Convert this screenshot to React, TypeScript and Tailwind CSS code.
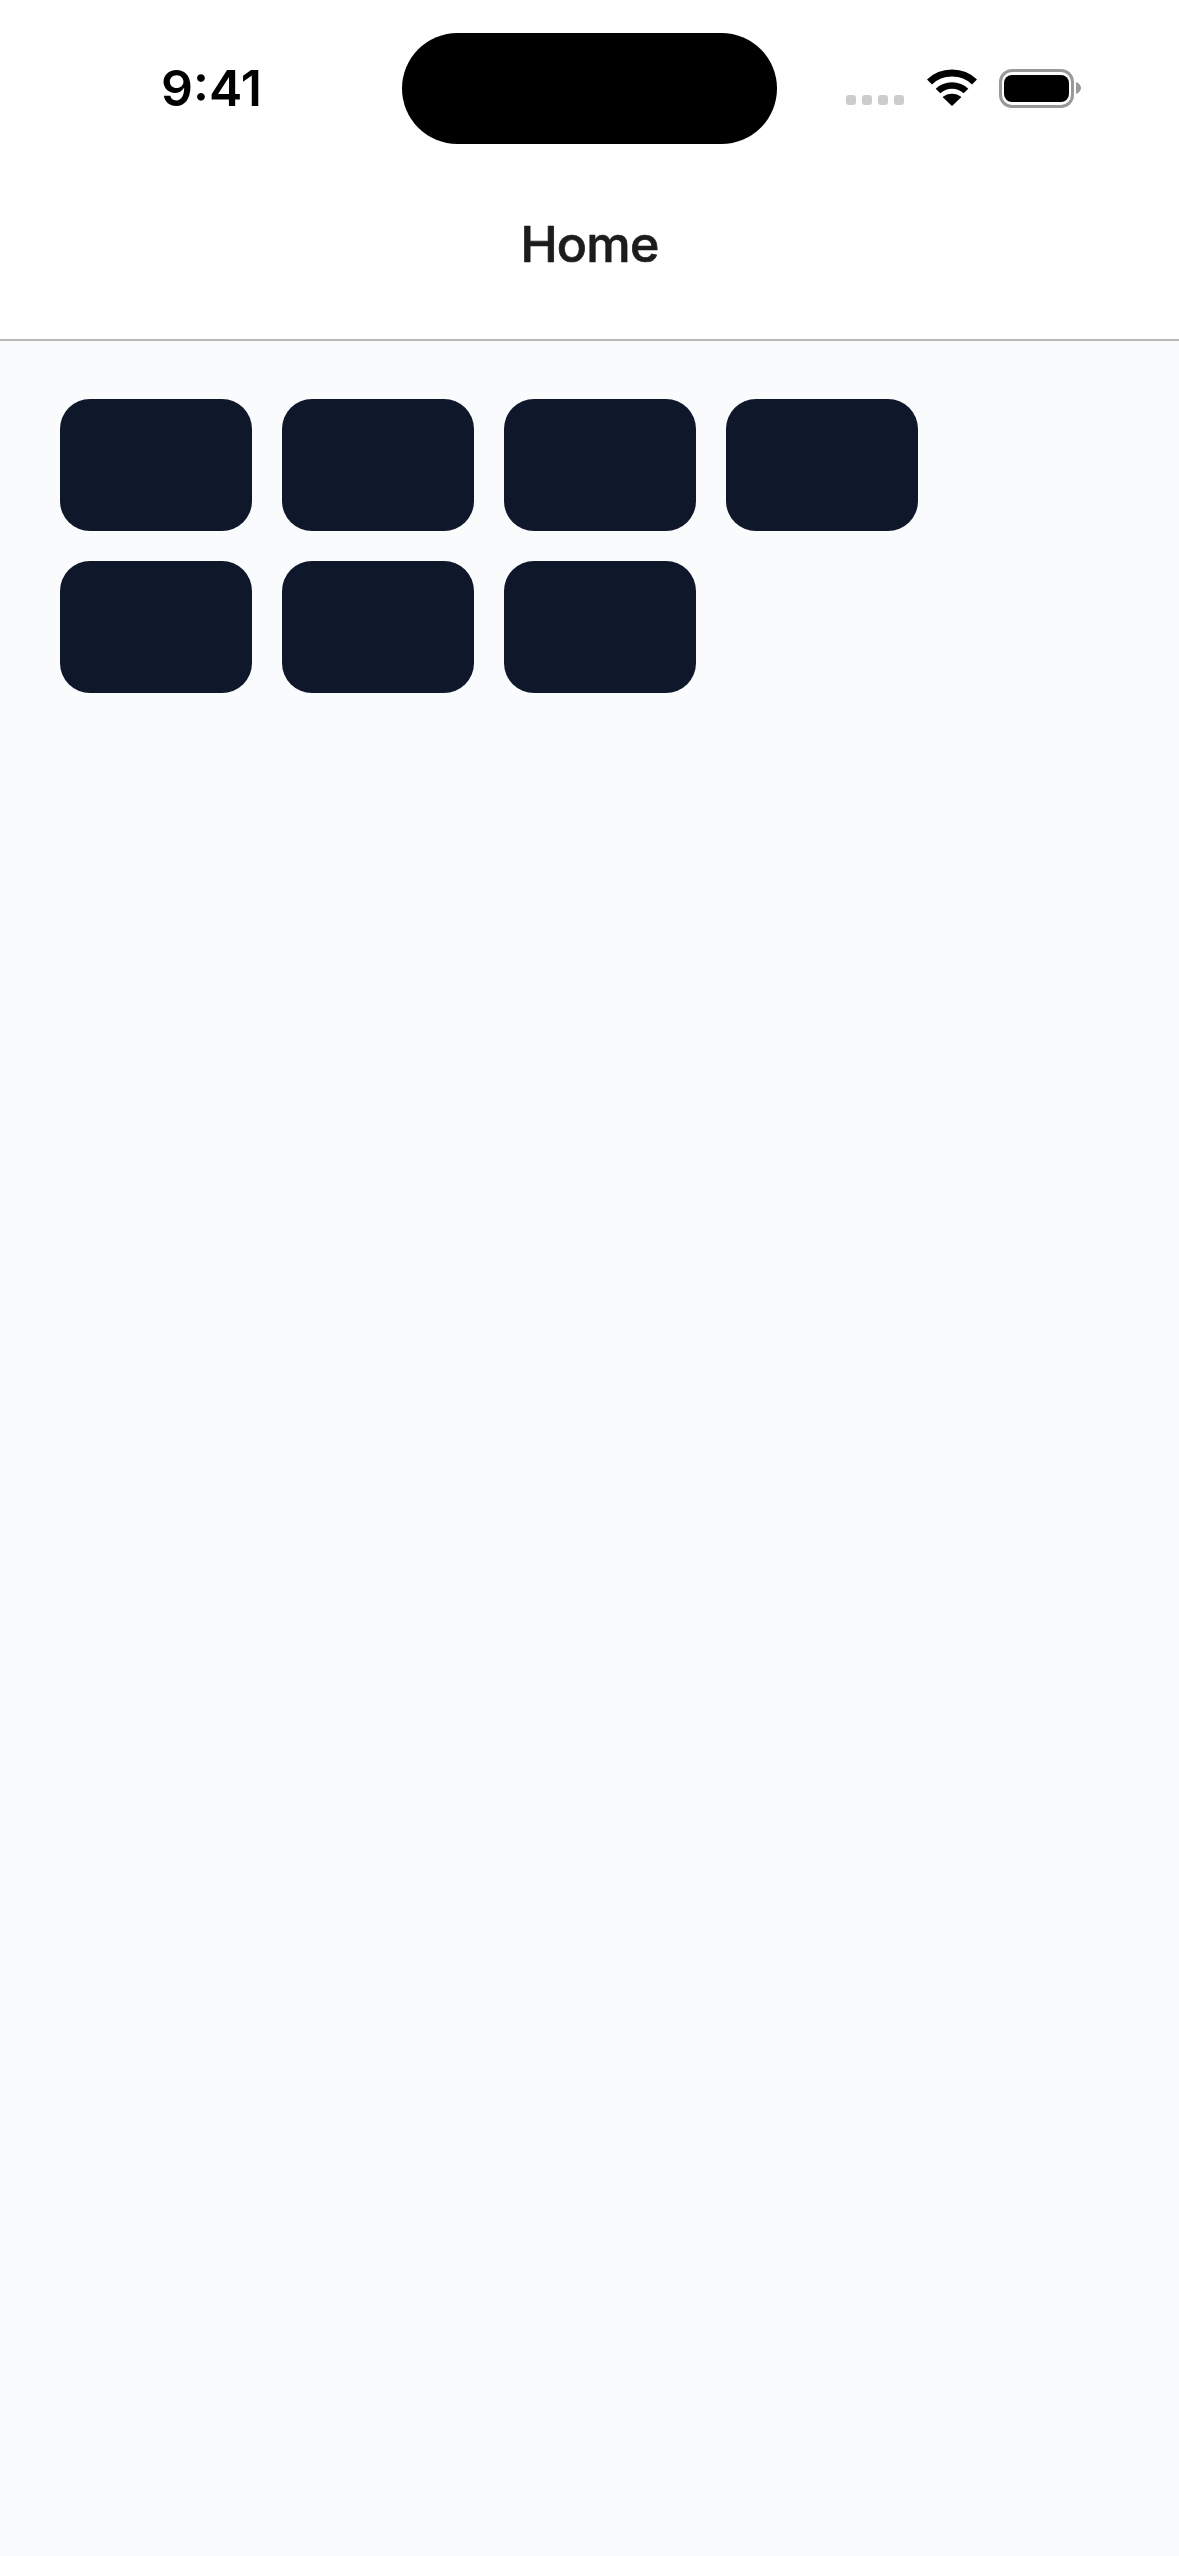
export default function App() {
  const cards = [0, 1, 2, 3, 4, 5, 6];
  return (
    <div className="flex min-h-[2556px] w-[1179px] flex-col bg-[#fafbfd] font-['Inter',sans-serif]">
      <header className="flex h-[341px] flex-col border-b-2 border-[#b9b9bb] bg-white">
        <div className="flex h-[176px] items-start pt-[33px]">
          <div className="flex h-[111px] w-[402px] items-center pb-[2px] pl-[161px]">
            <span className="text-[50px] leading-none font-semibold text-black">9:41</span>
          </div>
          <div className="h-[111px] w-[375px] rounded-[56px] bg-black" />
          <div className="flex h-[111px] flex-1 items-center pl-[69px]">
            <div className="mt-[23px] flex gap-[6px]">
              {[0, 1, 2, 3].map((d) => (
                <span key={d} className="h-[10px] w-[10px] rounded-[3px] bg-[#cccccc]" />
              ))}
            </div>
            <svg className="mb-[2px] ml-[23px]" width="50" height="37" viewBox="0 0 50 37" fill="none">
              <path d="M2.500 13C14.500 1 35.500 1 47.500 13" stroke="#000" strokeWidth="7" strokeLinecap="butt" />
              <path d="M11 22C18.500 14.500 31.500 14.500 39 22" stroke="#000" strokeWidth="6.500" strokeLinecap="butt" />
              <path d="M25 37L15.500 28C21 23.500 29 23.500 34.500 28Z" fill="#000" />
            </svg>
            <div className="mb-[1px] ml-[22px] flex items-center">
              <div className="flex h-[39px] w-[75px] items-center justify-center rounded-[13px] border-[3px] border-[#999999]">
                <div className="h-[27px] w-[65px] rounded-[8px] bg-black" />
              </div>
              <svg className="ml-[2px]" width="5" height="12" viewBox="0 0 5 12">
                <path d="M0 0C3 1 5 3.500 5 6C5 8.500 3 11 0 12Z" fill="#999999" />
              </svg>
            </div>
          </div>
        </div>
        <div className="flex flex-1 items-start justify-center pt-[38px]">
          <h1 className="text-[50px] leading-[60px] font-medium tracking-[-0.750px] text-[#1c1c1e] [-webkit-text-stroke:0.7px_#1c1c1e]">Home</h1>
        </div>
      </header>
      <main className="flex flex-wrap content-start gap-[30px] pt-[58px] pr-[120px] pl-[60px]">
        {cards.map((c) => (
          <div key={c} className="h-[132px] w-[192px] rounded-[30px] bg-[#0f172a]" />
        ))}
      </main>
    </div>
  );
}
